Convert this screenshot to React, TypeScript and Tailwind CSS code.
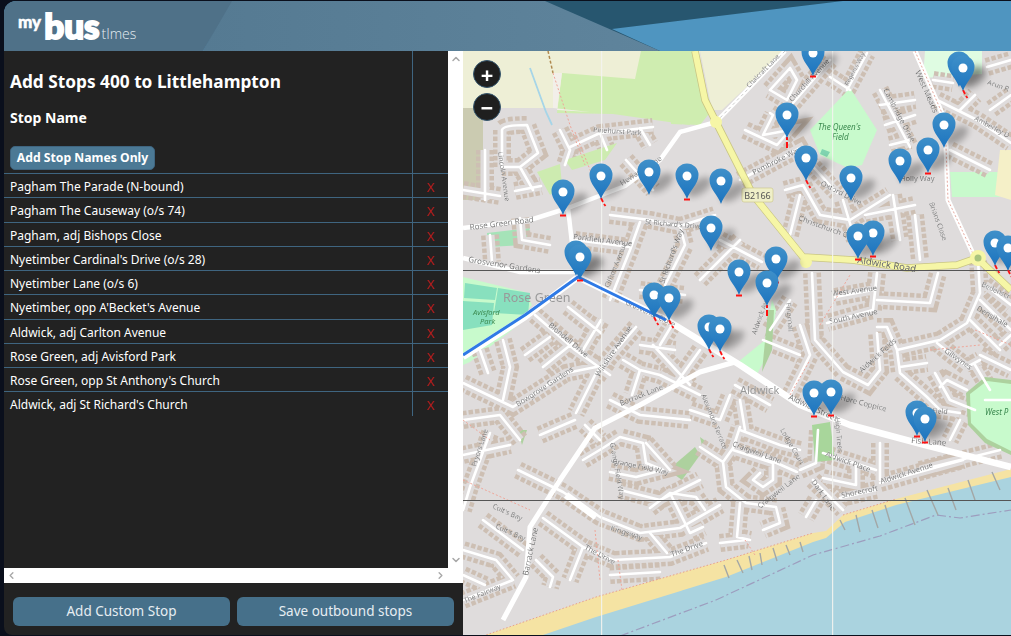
import React from "react";
import { ChevronUp, ChevronDown, ChevronLeft, ChevronRight } from "lucide-react";

const stops = [
  "Pagham The Parade (N-bound)",
  "Pagham The Causeway (o/s 74)",
  "Pagham, adj Bishops Close",
  "Nyetimber Cardinal's Drive (o/s 28)",
  "Nyetimber Lane (o/s 6)",
  "Nyetimber, opp A'Becket's Avenue",
  "Aldwick, adj Carlton Avenue",
  "Rose Green, adj Avisford Park",
  "Rose Green, opp St Anthony's Church",
  "Aldwick, adj St Richard's Church",
];

const residential = [
  "M502 167L502 130Q503 125 527 125L538 153L520 167L502 167",
  "M520 167L533 190M515 191L541 186M463 190L500 196M485 150L485 200",
  "M570 147L600 133L653 127M560 130L570 150L565 165M626 160L653 190M600 133L607 150M640 128L650 145",
  "M575 240L630 247M610 215L650 220L680 226L715 215M665 285L685 245L680 226",
  "M610 300L630 250L640 222M520 218L522 240L550 245M490 235L492 262",
  "M535 315L575 350L610 375M525 355L550 337M543 367L573 343M568 307L601 333M601 320L583 350",
  "M636 327L596 373L576 413M463 383L513 407L566 373L596 367M503 340L510 367L503 400M480 350L488 373",
  "M518 470L563 492L600 517L640 533L680 528L720 505M490 433L470 487L463 510M483 520L523 550",
  "M463 550L496 560L513 580M463 600L513 580M543 518L583 547L613 560L670 557L706 543M583 547L570 580M536 560L553 577L550 587",
  "M583 460L603 448L620 437L643 443L646 463L663 470L636 477L610 472M646 443L670 470",
  "M700 447L723 462L726 487L746 503L776 507L780 523L763 530M723 462L733 448L740 427M760 473L753 480L763 487L773 480L773 463L733 450",
  "M797 472L763 457M800 470L816 463L818 430M813 480L843 510M816 500L806 517M823 453L876 470M823 478L856 485L856 463M840 498L876 490M880 483L963 460M880 443L880 480",
  "M650 533L667 553M670 493L690 533L703 527M650 508L670 493L696 497L705 510M740 503L737 537L750 540M720 543L746 540",
  "M623 360L640 370L660 375M640 370L632 395M610 400L640 415L690 420M660 375L700 395M653 345L690 385M585 425L600 440",
  "M672 325L660 345M700 350L675 385M640 345L675 350M690 410L720 420L730 395M735 385L770 405M740 430L780 445L800 450M740 400L745 430",
  "M812 273L815 340L843 372L868 385L880 370L877 333M835 297L873 290M877 273L873 310L827 323M877 300L930 303L938 273",
  "M897 350L940 340L967 323L980 293L978 260M877 327L887 327L897 350L900 373L927 397L940 410L960 413",
  "M937 343L967 367L980 360M900 367L927 363M940 387L947 380L967 390M800 325L810 355L790 395M770 330L790 300M763 340L800 355",
  "M785 190L803 185L820 215L850 220L890 195M790 235L800 195M843 200L855 240M893 195L900 240M865 215L915 205M915 215L920 260",
  "M770 113L773 115L763 135L790 130L777 145L745 130M770 90L790 68L797 80L787 100L770 90M793 103L813 80L830 60",
  "M740 180L800 148L807 160L837 193M847 90L867 53M880 90L910 147M880 105L915 100M885 125L915 115M890 145L910 140M830 77L850 90",
  "M937 100L977 120L1011 143M987 67L1011 60M933 80L953 83M960 110L975 95M1011 95L990 110M950 150L990 170",
  "M985 285L1011 305M980 300L1011 330M970 320L1000 350M1000 345L1011 335M980 355L1011 370M960 420L950 440M985 400L1011 400",
  "M935 373L950 400L975 410M990 390L975 365M920 470L1000 450M640 290L685 295M700 280L740 240M720 240L762 262",
  "M463 420L500 415L520 440M463 455L510 445M540 435L575 420M620 490L660 500L700 480M463 575L485 585M610 575L660 572",
];

const labels: [string, number, number, number, number?, string?][] = [
  ["Pinehurst Park", 593, 132, 4, 7],
  ["Lincoln Avenue", 498, 152, 82, 7],
  ["Hewarts Lane", 622, 186, -33, 7.5],
  ["Chalcraft Lane", 749, 88, -45, 6.5],
  ["Churchill Avenue", 792, 102, -47, 7],
  ["Regents Way", 848, 86, -62, 6],
  ["Cambridge Drive", 883, 90, 62, 7.5],
  ["West Meads", 915, 72, 66, 8],
  ["Arun R", 987, 84, 20, 7],
  ["Amberley D", 974, 120, 28, 7],
  ["Pembroke Way", 754, 175, -27, 7.5],
  ["Oxford Drive", 820, 185, 27, 7.5],
  ["Holly Way", 900, 181, 0, 7.5],
  ["Rose Green Road", 470, 230, -7, 8],
  ["Parkfield Avenue", 573, 239, 7, 7.5],
  ["St Richard's Drive", 645, 224, 5, 7],
  ["St Richard's Way", 664, 284, -70, 7.5],
  ["Grosvenor Gardens", 468, 262, 9, 8],
  ["Clifton Avenue", 609, 288, -68, 7],
  ["Grosvenor Close", 625, 304, 25, 7],
  ["Blondell Drive", 548, 326, 40, 7.5],
  ["Wiltshire Avenue", 599, 377, -56, 7.5],
  ["Bowgrove Gardens", 518, 407, -33, 7.5],
  ["Barrack Lane", 621, 406, -22, 7.5],
  ["Alexandra Terrace", 701, 395, 68, 7],
  ["Christchurch Crescent", 798, 220, 20, 7.5],
  ["Brians Close", 929, 203, 70, 7],
  ["Aldwick Road", 857, 263, 9, 9.5, "#333"],
  ["West Avenue", 832, 296, -7, 7.5],
  ["South Avenue", 830, 324, -12, 7.5],
  ["Fingrhall", 786, 303, 85, 7],
  ["Aldwick Avenue", 756, 335, -70, 7],
  ["Aldwick Felds", 862, 373, -42, 7.5],
  ["Gilwynes", 944, 352, 35, 7.5],
  ["Densihale", 976, 310, 30, 7.5],
  ["Bedenscr", 981, 286, 25, 7],
  ["Aldwick Street", 788, 399, 25, 8],
  ["Hare Coppice", 840, 400, 14, 7.5],
  ["Fish Lane", 911, 443, 4, 8],
  ["Field", 932, 413, 4, 7],
  ["Lodge Court", 780, 430, 60, 7],
  ["Craigweil Lane", 732, 446, 20, 7.5],
  ["High Trees", 835, 418, 85, 7],
  ["Aldwick Place", 825, 456, 20, 7.5],
  ["Aldwick Avenue", 881, 484, -18, 7.5],
  ["Shorecroft", 842, 498, -12, 7.5],
  ["Dark Lane", 811, 482, 55, 7.5],
  ["Craigweil Lane", 760, 509, -38, 7.5],
  ["Grange Field Way", 610, 443, 80, 7],
  ["Grange Field Way", 612, 463, 12, 7],
  ["Pryors Lane", 476, 467, -72, 7],
  ["Colt's Bay", 492, 508, 24, 7],
  ["Colt's Bay", 495, 528, 24, 7],
  ["Kingsway", 610, 530, 18, 7.5],
  ["The Drive", 584, 549, 28, 7.5],
  ["The Drive", 672, 557, -20, 7.5],
  ["The Fairway", 465, 603, -22, 7],
  ["Barrack Lane", 528, 576, -78, 8],
];

type PinT = { x: number; y: number; m?: "h" | "v" | "d" };
const pins: PinT[] = [
  { x: 813, y: 53, m: "h" },
  { x: 959, y: 64 },
  { x: 963, y: 68, m: "d" },
  { x: 944, y: 125 },
  { x: 787, y: 115, m: "v" },
  { x: 928, y: 150, m: "h" },
  { x: 900, y: 161 },
  { x: 806, y: 158, m: "d" },
  { x: 851, y: 178 },
  { x: 649, y: 172 },
  { x: 601, y: 176, m: "d" },
  { x: 687, y: 176, m: "h" },
  { x: 721, y: 181 },
  { x: 563, y: 192, m: "h" },
  { x: 711, y: 228 },
  { x: 576, y: 253 },
  { x: 580, y: 257, m: "h" },
  { x: 776, y: 259, m: "h" },
  { x: 873, y: 233, m: "h" },
  { x: 858, y: 236, m: "h" },
  { x: 739, y: 272, m: "h" },
  { x: 767, y: 283, m: "v" },
  { x: 654, y: 295, m: "d" },
  { x: 669, y: 298, m: "d" },
  { x: 709, y: 327, m: "d" },
  { x: 720, y: 329, m: "d" },
  { x: 995, y: 243, m: "d" },
  { x: 1008, y: 248, m: "d" },
  { x: 831, y: 392, m: "h" },
  { x: 814, y: 393, m: "h" },
  { x: 917, y: 413, m: "h" },
  { x: 925, y: 419, m: "h" },
];

function Pin({ x, y, m }: PinT) {
  return (
    <g transform={`translate(${x} ${y})`}>
      {m === "h" && <rect x={-3} y={22.5} width={6} height={2} fill="#f11" />}
      {m === "v" && <path d="M0 22V25M0 27V33" stroke="#f11" strokeWidth={2} />}
      {m === "d" && <path d="M0 22L2 26M3 28L4.5 30" stroke="#f11" strokeWidth={1.8} fill="none" />}
      <path d="M0 23C-3 14 -11.5 8 -11.5 -1A11.5 11.5 0 1 1 11.5 -1C11.5 8 3 14 0 23Z" fill="url(#pinFill)" />
      <circle cx={0} cy={0} r={4.5} fill="#fff" />
    </g>
  );
}

function MapDrawing() {
  const d = residential.join(" ");
  const grey = "#dfdcdc";
  const sans = "'Noto Sans', sans-serif";
  return (
    <svg viewBox="463 51 548 584" className="block h-full w-full" preserveAspectRatio="none">
      <defs>
        <linearGradient id="pinFill" x1="0" y1="0" x2="0" y2="1">
          <stop offset="0" stopColor="#3f90c9" />
          <stop offset="1" stopColor="#1c74bf" />
        </linearGradient>
        <filter id="soft" x="-2%" y="-2%" width="104%" height="104%">
          <feGaussianBlur stdDeviation="0.5" />
        </filter>
        <filter id="shadow" x="-50%" y="-50%" width="200%" height="200%">
          <feGaussianBlur stdDeviation="3" />
        </filter>
      </defs>
      <g filter="url(#soft)">
        <rect x={463} y={51} width={548} height={585} fill={grey} />
        <path d="M463 51H700L704 110L660 118L600 112L570 108L463 108Z" fill="#eeefd6" />
        <path d="M562 73L635 79L641 51H671L690 125L613 114L557 113Z" fill="#cfedb0" />
        <path d="M553 73L562 73L557 110L590 112L553 108Z" fill="#f2efe9" />
        <path d="M463 108H483V200H463Z" fill="#cbcbb1" />
        <path d="M671 51H695L712 110L700 125L671 124Z" fill="#cfedb0" />
        <path d="M700 51H785L722 110L712 110Z" fill="#eeefd6" />
        <path d="M925 51H982L982 74L923 78Z" fill="#dffce2" />
        <path d="M950 172H1000V197H952Z" fill="#c8facc" />
        <path d="M1000 150L1011 150V200L995 195Z" fill="#f5f0c8" />
        <path d="M463 277L525 292L532 305L512 330L470 362L463 365Z" fill="#c8facc" />
        <path d="M465 283L497 288L495 300L464 298ZM498 288L530 293L528 315L494 313ZM463 301L494 303L492 325L463 330Z" fill="#88e0be" />
        <path d="M487 233L530 228L525 245L488 247Z" fill="#a5e3b8" />
        <path d="M668 470L695 447L700 455L682 480Z" fill="#add19e" />
        <path d="M700 437L708 443L703 450Z" fill="#add19e" />
        <path d="M518 430H527L522 445Z" fill="#add19e" />
        <path d={d} fill="none" stroke="#cdbfb3" strokeWidth={18} strokeDasharray="4.5 2" />
        <path d={d} fill="none" stroke={grey} strokeWidth={9} />
        <path d="M537 172L560 164L562 185L550 195ZM565 160L617 143L605 160L572 170Z" fill="#cdebb0" />
        <path d="M850 88L877 130L862 165L848 168L820 155L810 130Z" fill="#c8facc" />
        <path d="M822 149L830 152L827 157L820 154Z" fill="#7fd4b0" />
        <path d="M966 393L985 377L1011 380V455L985 443L968 425Z" fill="#add19e" />
        <path d="M970 394L987 381L1011 384V451L987 439L971 423Z" fill="#c8facc" />
        <path d="M812 425L830 422L835 460L815 462Z" fill="#a8d69b" />
        <path d="M738 362L765 340L772 300L776 310L770 350L755 378Z" fill="#c8facc" />
        <path d="M768 310L774 310L772 350L762 372Z" fill="#add19e" />
        <path d={d} fill="none" stroke="#fff" strokeWidth={2.6} strokeLinecap="round" strokeLinejoin="round" />
        <path d="M483 636L596 597L726 560L813 533L826 531L843 515L896 499L1011 469V636Z" fill="#f5e3a3" />
        <path d="M483 636L596 597L726 560L813 533M843 515L896 499" stroke="#e8a08e" strokeDasharray="1.5 2" fill="none" />
        <path d="M540 636L596 617L726 577L813 542L826 538L845 522L896 505L1011 477V636Z" fill="#aad3df" />
        <path d="M620 636L716 600L813 555L880 536L936 515L960 518L1011 510" fill="none" stroke="#9d9dbe" strokeWidth={1.2} strokeDasharray="9 3 2 3" />
        <path d="M724 565L729 578M737 560L743 573M749 556L752 570M760 553L762 565M773 548L777 561M786 545L790 555M800 542L803 552M840 520L845 530M856 515L860 532M872 510L878 528M885 505L890 522M905 498L915 525M927 490L938 515M948 488L956 510M968 480L975 500M992 472L1000 490" stroke="#a3a7a6" strokeWidth={1.4} fill="none" />
        <path d="M463 228L530 220L568 208L625 186L660 160L680 132L716 122M716 122L785 51M568 208L575 270M463 258L520 272L578 272" fill="none" stroke="#fff" strokeWidth={4.5} strokeLinejoin="round" />
        <path d="M463 357L525 317L578 277L670 322L740 365L800 405L850 425L925 445L1011 467" fill="none" stroke="#fff" strokeWidth={6.5} strokeLinejoin="round" />
        <path d="M503 620L526 577L530 527L560 480L595 428L640 405L700 372L735 362" fill="none" stroke="#fff" strokeWidth={5} strokeLinejoin="round" />
        <path d="M566 495L596 517" stroke="#fff" strokeWidth={7} />
        <path d="M915 51L945 120L948 200L975 258" fill="none" stroke="#fff" strokeWidth={5} />
        <path d="M915 51L945 120L948 200L975 258" fill="none" stroke="#e6aaa0" strokeWidth={1} strokeDasharray="2 2" />
        <path d="M716 122L785 51" fill="none" stroke="#ccc" strokeWidth={1} strokeDasharray="3 3" />
        <path d="M553 73L570 125L585 165M575 132L600 195M820 325L850 275M790 395L810 360M463 420L490 440M463 480L530 510M595 530L600 580M618 560L622 590M745 540L755 555M975 330L1011 345M930 350L980 345" fill="none" stroke="#efa699" strokeWidth={1} strokeDasharray="2 2" />
        <path d="M548 51L553 73" stroke="#b08a50" strokeWidth={1.5} strokeDasharray="3 2" />
        <path d="M530 68L546 112L552 125" stroke="#a6d5e8" strokeWidth={1.8} fill="none" />
        <path d="M695 51L705 100L716 122L753 195L803 257L853 260L907 268L957 265L977 258L1011 290" fill="none" stroke="#c9c584" strokeWidth={7.5} strokeLinejoin="round" />
        <path d="M695 51L705 100L716 122L753 195L803 257L853 260L907 268L957 265L977 258L1011 290" fill="none" stroke="#f6f6a6" strokeWidth={6} strokeLinejoin="round" />
        <circle cx={716} cy={122} r={6} fill="#f6f6a6" />
        <circle cx={806} cy={262} r={6} fill="#f6f6a6" />
        <circle cx={978} cy={258} r={8} fill="#f6f6a6" />
        <circle cx={978} cy={258} r={3.5} fill="#a9c47f" />
        <rect x={742} y={188} width={31} height={14} rx={2} fill="#efefc8" stroke="#c9c584" strokeWidth={0.6} />
        <text x={757.5} y={198.5} textAnchor="middle" fontSize={9} fontFamily={sans} fill="#555">B2166</text>
        {labels.map(([t, x, y, r, s, c], i) => (
          <text key={i} transform={`translate(${x} ${y}) rotate(${r})`} fontSize={s ?? 7} fontFamily={sans} fill={c ?? "#4c4c4c"} stroke="#fff" strokeWidth={0.15}>
            {t}
          </text>
        ))}
        <text x={503} y={302} fontSize={12.5} fontFamily={sans} fill="#999">Rose Green</text>
        <text x={740} y={394} fontSize={11} fontFamily={sans} fill="#999">Aldwick</text>
        <text x={473} y={315} fontSize={7.5} fontStyle="italic" fontFamily={sans} fill="#3c8a50">Avisford</text>
        <text x={480} y={324} fontSize={7.5} fontStyle="italic" fontFamily={sans} fill="#3c8a50">Park</text>
        <text x={818} y={130} fontSize={8} fontStyle="italic" fontFamily={sans} fill="#3c8a50">The Queen's</text>
        <text x={832} y={140} fontSize={8} fontStyle="italic" fontFamily={sans} fill="#3c8a50">Field</text>
        <text x={985} y={415} fontSize={8} fontStyle="italic" fontFamily={sans} fill="#3c8a50">West P</text>
        <rect x={601} y={51} width={1.2} height={585} fill="#f3f3f0" opacity={0.9} />
        <rect x={832} y={51} width={1.2} height={585} fill="#f3f3f0" opacity={0.9} />
        <rect x={463} y={270} width={548} height={1} fill="#555" />
        <rect x={463} y={500} width={548} height={1} fill="#555" />
      </g>
      <path d="M463 355L525 315L578 277L666 320" fill="none" stroke="#2f7ae6" strokeWidth={3} strokeLinejoin="round" />
      {pins.map((p, i) => (
        <ellipse key={`s${i}`} cx={p.x + 12} cy={p.y + 11} rx={14} ry={7} transform={`rotate(-35 ${p.x + 12} ${p.y + 11})`} fill="#000" opacity={0.28} filter="url(#shadow)" />
      ))}
      {pins.map((p, i) => (
        <Pin key={i} {...p} />
      ))}
    </svg>
  );
}

export default function App() {
  return (
    <div className="flex h-screen w-full flex-col overflow-hidden bg-[#0a0f1c] pt-px pb-px pl-1 font-['Noto_Sans',sans-serif]">
      <header className="relative h-[50px] shrink-0 overflow-hidden rounded-tl-xl bg-[#4f95c0]">
        <svg className="absolute inset-0 h-full w-full" viewBox="4 1 1007 50" preserveAspectRatio="none">
          <defs>
            <linearGradient id="mid" x1="0" y1="0" x2="1" y2="0">
              <stop offset="0" stopColor="#557a92" />
              <stop offset="1" stopColor="#5f849c" />
            </linearGradient>
          </defs>
          <path d="M545 1H843L612 29L660 51H545Z" fill="#27566f" />
          <path d="M230 1H545L660 51H203Z" fill="url(#mid)" />
          <path d="M4 1H232L203 51H4Z" fill="#4f7188" />
        </svg>
        <div className="absolute top-[6px] left-[14px] flex items-end text-white">
          <span className="mb-[14px] text-[17px] leading-[15px] font-black font-['Lato',sans-serif] [-webkit-text-stroke:0.5px_white]">my</span>
          <span className="ml-[3px] text-[35px] leading-[36px] font-black font-['Lato',sans-serif] [-webkit-text-stroke:2px_white]">bus</span>
          <span className="mb-[2px] ml-[2px] text-[14px] leading-[14px] font-light text-[#e6edf2] font-['Open_Sans',sans-serif]">tImes</span>
        </div>
      </header>
      <main className="flex min-h-0 flex-1">
        <section className="flex w-[459px] shrink-0 flex-col">
          <div className="flex min-h-0 flex-1">
            <div className="flex min-h-0 flex-1 flex-col">
              <div className="min-h-0 flex-1 bg-[#222222] text-white">
                <div className="flex h-[122px]">
                  <div className="w-[409px] border-r border-[#3f6580] pl-1.5">
                    <h1 className="mt-[18px] text-[17.25px] leading-[26px] font-bold">Add Stops 400 to Littlehampton</h1>
                    <h2 className="mt-[13px] text-[14px] leading-[20px] font-bold">Stop Name</h2>
                    <button className="mt-[18px] h-6 w-[145px] rounded-[5px] border border-[#3f6580] bg-[#4b7995] text-[12.2px] font-bold text-white">Add Stop Names Only</button>
                  </div>
                </div>
                {stops.map((s) => (
                  <div key={s} className="flex h-[24.28px] border-t border-[#3f6580] text-[12px] leading-[26px]">
                    <div className="w-[409px] border-r border-[#3f6580] pl-1.5 whitespace-nowrap">{s}</div>
                    <div className="flex-1 text-center text-[13px] text-[#b71c1c]">X</div>
                  </div>
                ))}
              </div>
              <div className="flex h-[15px] shrink-0 items-center justify-between bg-white px-0.5 text-[#a8a8a8]">
                <ChevronLeft size={11} strokeWidth={3} />
                <ChevronRight size={11} strokeWidth={3} />
              </div>
            </div>
            <div className="flex w-[15px] shrink-0 flex-col items-center justify-between bg-white py-0.5 text-[#a8a8a8]">
              <ChevronUp size={12} strokeWidth={3} />
              <ChevronDown size={12} strokeWidth={3} className="mb-[15px]" />
            </div>
          </div>
          <div className="flex h-[52px] shrink-0 gap-[7px] rounded-bl-lg bg-[#222222] pt-[14px] pl-[9px]">
            <button className="h-[29px] w-[217px] rounded-md bg-[#46708a] text-[13.5px] text-[#e6edf2]">Add Custom Stop</button>
            <button className="h-[29px] w-[217px] rounded-md bg-[#46708a] text-[13.5px] text-[#e6edf2]">Save outbound stops</button>
          </div>
        </section>
        <div className="relative min-w-0 flex-1 overflow-hidden">
          <MapDrawing />
          <div className="absolute top-[9px] left-[10px] flex flex-col gap-[5px]">
            <button className="flex h-7 w-7 items-center justify-center rounded-full border border-[#35566e] bg-[#1f1f1f] text-[22px] leading-none font-bold text-white">+</button>
            <button className="flex h-7 w-7 items-center justify-center rounded-full border border-[#35566e] bg-[#1f1f1f] text-[22px] leading-none font-bold text-white">−</button>
          </div>
        </div>
      </main>
    </div>
  );
}
